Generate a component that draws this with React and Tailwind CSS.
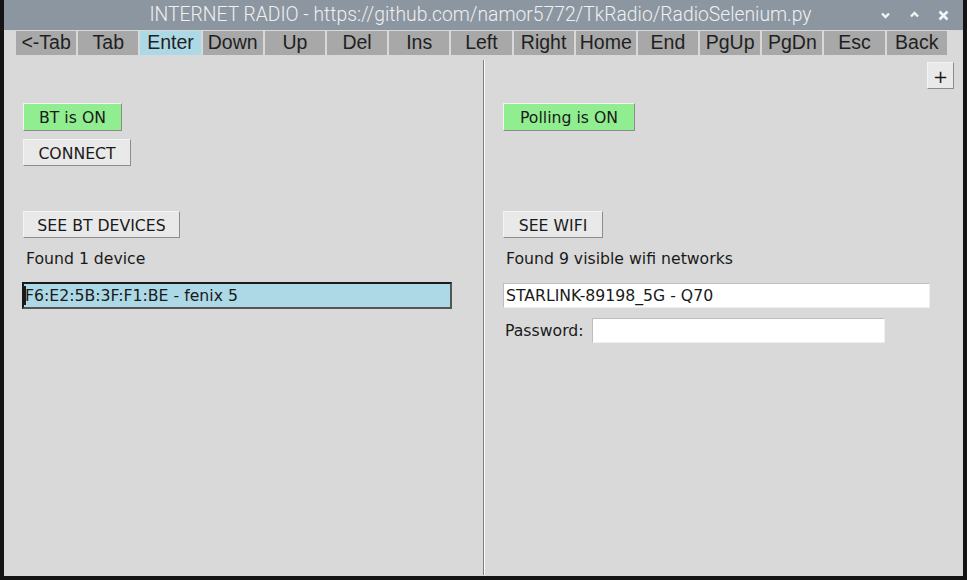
const KEYS = ['<-Tab', 'Tab', 'Enter', 'Down', 'Up', 'Del', 'Ins', 'Left', 'Right', 'Home', 'End', 'PgUp', 'PgDn', 'Esc', 'Back'];

const tkFont = { fontFamily: '"DejaVu Sans", sans-serif' };

const TkButton = ({ label, green, className = '' }) => (
  <div
    className={`flex items-center justify-center pt-[2px] text-[15.7px] text-[#1a1a1a] border border-t-[#f4f4f4] border-l-[#f4f4f4] border-b-[#8c8c8c] border-r-[#8c8c8c] ${green ? 'bg-[#90ee90]' : 'bg-[#e9e9e9]'} ${className}`}
  >
    {label}
  </div>
);

const App = () => {
  return (
    <div className="w-[967px] h-[580px] bg-[#141414] px-[4px] pb-[4px] flex flex-col overflow-hidden" style={tkFont}>
      {/* title bar */}
      <div className="h-[30px] bg-[#8c96a0] flex items-center relative shrink-0">
        <div className="flex-1 text-center text-[19.3px] font-light text-[#eef0f2] pr-[6px] pt-[1px]" style={{ fontFamily: 'Roboto, sans-serif' }}>
          INTERNET RADIO - https://github.com/namor5772/TkRadio/RadioSelenium.py
        </div>
        <div className="absolute right-[14px] top-0 h-full flex items-center gap-[18px]">
          <svg width="11" height="8" viewBox="0 0 11 8">
            <path d="M2 2.5 L5.5 6 L9 2.5" fill="none" stroke="#f4f4f4" strokeWidth="2.4" />
          </svg>
          <svg width="11" height="8" viewBox="0 0 11 8">
            <path d="M2 5.5 L5.5 2 L9 5.5" fill="none" stroke="#f4f4f4" strokeWidth="2.4" />
          </svg>
          <svg width="11" height="11" viewBox="0 0 11 11">
            <path d="M1.5 1.5 L9.5 9.5 M9.5 1.5 L1.5 9.5" fill="none" stroke="#f4f4f4" strokeWidth="2.6" />
          </svg>
        </div>
      </div>

      {/* main */}
      <div className="flex-1 bg-[#d9d9d9] flex flex-col">
        <div className="flex gap-[2px] pl-[12px] mt-[1px] h-[24px]">
          {KEYS.map(k => (
            <div
              key={k}
              className={`w-[60.2px] h-full flex items-center justify-center text-[19.5px] text-[#1f1f1f] ${k === 'Enter' ? 'bg-[#add8e6]' : 'bg-[#a8a8a8]'}`}
              style={{ fontFamily: '"Liberation Sans", Arial, sans-serif' }}
            >
              {k}
            </div>
          ))}
        </div>

        <div className="flex-1 flex mt-[5px]">
          {/* left */}
          <div className="w-[479px] flex flex-col pl-[19px]">
            <TkButton label="BT is ON" green className="mt-[43px] w-[99px] h-[28px]" />
            <TkButton label="CONNECT" className="mt-[8px] w-[108px] h-[27px]" />
            <TkButton label="SEE BT DEVICES" className="mt-[45px] w-[157px] h-[27px]" />
            <div className="mt-[10px] h-[20px] leading-[20px] pt-[1px] pl-[3px] text-[15.7px] text-[#1a1a1a]">Found 1 device</div>
            <div className="mt-[14px] -ml-[1px] w-[430px] h-[27px] bg-[#add8e6] border-[2px] border-[#1a1a1a] border-b-[#555] border-r-[#555] flex items-center text-[15.7px] text-[#1a1a1a]">
              <span className="w-[2px] h-[19px] bg-[#1a1a1a]" />
              <span className="-ml-[1px]">F6:E2:5B:3F:F1:BE - fenix 5</span>
            </div>
          </div>

          {/* divider */}
          <div className="w-[1px] bg-[#7f7f7f] mb-[1px]" />
          <div className="w-[1px] bg-[#fafafa] mb-[1px]" />

          {/* right */}
          <div className="flex-1 flex flex-col pl-[18px]">
            <TkButton label="+" className="self-end mr-[9px] mt-[2px] w-[27px] h-[27px] text-[18px]" />
            <TkButton label="Polling is ON" green className="mt-[14px] w-[132px] h-[28px]" />
            <TkButton label="SEE WIFI" className="mt-[80px] w-[100px] h-[27px]" />
            <div className="mt-[10px] h-[20px] leading-[20px] pt-[1px] pl-[3px] text-[15.7px] text-[#1a1a1a]">Found 9 visible wifi networks</div>
            <div className="mt-[15px] w-[427px] h-[25px] bg-white border border-[#bdbdbd] border-b-[#eeeeee] border-r-[#eeeeee] flex items-center pl-[2px] text-[15.7px] text-[#1a1a1a]">
              STARLINK-89198_5G - Q70
            </div>
            <div className="mt-[10px] flex items-center h-[25px]">
              <span className="w-[89px] pl-[2px] text-[15.7px] text-[#1a1a1a]">Password:</span>
              <div className="w-[293px] h-[25px] bg-white border border-[#bdbdbd] border-b-[#eeeeee] border-r-[#eeeeee]" />
            </div>
          </div>
        </div>
      </div>
    </div>
  );
};

export default App;
